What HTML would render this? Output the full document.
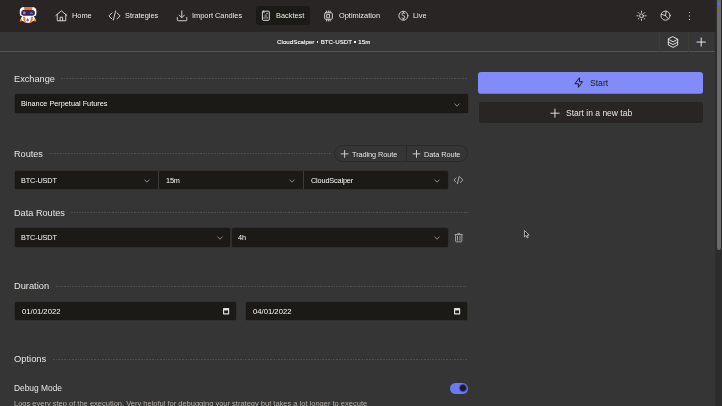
<!DOCTYPE html>
<html><head><meta charset="utf-8">
<style>
*{margin:0;padding:0;box-sizing:border-box}
html,body{width:722px;height:406px;overflow:hidden;background:#353535;font-family:"Liberation Sans",sans-serif;color:#e7e5e4}
.a{position:absolute;white-space:nowrap;line-height:1;will-change:transform}
svg{position:absolute;overflow:visible}
.ic{width:13.54px;height:13.54px;fill:none;stroke:#d6d3d1;stroke-width:1.5;stroke-linecap:round;stroke-linejoin:round}
.ic5{width:11.28px;height:11.28px;fill:none;stroke:#d6d3d1;stroke-width:1.5;stroke-linecap:round;stroke-linejoin:round}
#nav{position:absolute;left:0;top:0;width:715px;height:31.5px;background:#292524}
#sub{position:absolute;left:0;top:31.5px;width:715px;height:20px;background:#363636;border-bottom:1px solid #57514b}
.nt{font-size:7.4px;top:12px;color:#ecebea}
.h{font-size:9.2px;color:#e7e5e4}
.dots{position:absolute;height:1.3px;margin-top:.2px;background-image:repeating-linear-gradient(90deg,#4f4c49 0 1.7px,transparent 1.7px 2.75px)}
.sel{position:absolute;background:#1c1a17;border-radius:1.6px;box-shadow:0 0 0 .5px #2d2a27}
.st{font-size:7.3px;letter-spacing:-.15px;color:#fafaf9}
.chev{stroke:#a8a29e;stroke-width:.8;fill:none}
#scroll{position:absolute;left:715px;top:0;width:7px;height:406px;background:#2c2c2c}
#thumb{position:absolute;left:716.8px;top:0;width:4.2px;height:250px;background:#6b6b6b;border-radius:0 0 2px 2px}
</style></head><body>
<div id="nav">
  <!-- logo -->
  <svg style="left:0;top:0" width="40" height="28" viewBox="0 0 40 28">
    <path d="M22.2 16 L19.7 21.2 L22.9 21 L23.3 16.5Z M33.8 16 L36.3 21.2 L33.1 21 L32.7 16.5Z" fill="#fff"/>
    <path d="M21 18.7 L19.7 21.2 L22.3 21.05Z M35 18.7 L36.3 21.2 L33.7 21.05Z" fill="#f97316"/>
    <path d="M22.6 15.5 L33.4 15.5 L33.4 19.6 Q33 22.9 28 22.9 Q23 22.9 22.6 19.6 Z" fill="#fff"/>
    <path d="M22.9 16.7 L25.1 16.7 Q25.2 20.6 26.2 22.9 L25.1 22.9 Q23 21 22.9 16.7Z M33.1 16.7 L30.9 16.7 Q30.8 20.6 29.8 22.9 L30.9 22.9 Q33 21 33.1 16.7Z" fill="#f97316"/>
    <path d="M27.65 17.9 Q29 19.6 28.9 20.5 Q28.8 21.5 27.65 21.5 Q26.5 21.5 26.4 20.5 Q26.3 19.6 27.65 17.9Z" fill="#5663ee"/>
    <path d="M19.8 11.2 Q19.8 7 24.3 7 L31.9 7 Q36.4 7 36.4 11.2 L36.4 14 Q36.4 16.3 34.1 16.3 L22.1 16.3 Q19.8 16.3 19.8 14 Z" fill="#fff"/>
    <path d="M24 7.05 L32.6 7.05 L32.2 9.9 L24.4 9.9 Z" fill="#f97316"/>
    <rect x="21.2" y="10" width="13.7" height="5.8" rx="2.7" fill="#2f2a78"/>
    <circle cx="24.3" cy="12.8" r="1.4" fill="#f97316"/>
    <path d="M30.35 13.75 Q31.45 11.7 32.55 13.75" stroke="#f97316" stroke-width="1.15" fill="none"/>
  </svg>
  
  <div class="a nt" style="left:71.6px">Home</div>
  
  <div class="a nt" style="left:124.6px">Strategies</div>
  
  <div class="a nt" style="left:191.6px">Import Candles</div>
  <div style="position:absolute;left:256px;top:6px;width:54px;height:19px;background:#1c1a17;border-radius:3px"></div>
  
  <div class="a nt" style="left:276px">Backtest</div>
  
  <div class="a nt" style="left:338.6px">Optimization</div>
  
  <div class="a nt" style="left:413.4px">Live</div>
  
  
  
</div>
<div id="sub">
  <div class="a" style="left:276.9px;top:7.45px;font-size:6.15px;letter-spacing:.05px;color:#fafaf9;-webkit-text-stroke:.12px #fafaf9">CloudScalper <span style="display:inline-block;width:1.5px;height:1.5px;background:#fafaf9;vertical-align:1.3px;margin:0 .6px"></span> BTC-USDT <span style="display:inline-block;width:1.5px;height:1.5px;background:#fafaf9;vertical-align:1.3px;margin:0 .6px"></span> 15m</div>
  <div style="position:absolute;left:658.5px;top:0;width:.6px;height:20px;background:#403c38"></div>
  <div style="position:absolute;left:687.5px;top:0;width:.6px;height:20px;background:#403c38"></div>
  
  
</div>

<!-- Exchange -->
<div class="a h" style="left:14px;top:75.1px">Exchange</div>
<div class="dots" style="left:60.5px;top:77.7px;width:407.5px"></div>
<div class="sel" style="left:14.6px;top:94.1px;width:453px;height:18.7px"></div>
<div class="a st" style="left:20.7px;top:100.1px;font-size:7.3px;letter-spacing:0">Binance Perpetual Futures</div>
<svg style="left:453.5px;top:102.5px" width="6" height="4" viewBox="0 0 6 4"><path class="chev" d="M.5 .6L3 3.2 5.5 .6"/></svg>

<!-- Start buttons -->
<div style="position:absolute;left:478px;top:72px;width:225px;height:22px;background:#818cf8;border-radius:3px;border-bottom:1px solid #6d72e0"></div>
<svg style="left:560px;top:70px" width="30" height="25" viewBox="560 70 30 25" fill="none" stroke="#1c1917" stroke-width="1" stroke-linecap="round" stroke-linejoin="round"><path d="M579.46 78.2V81.74H582.58L578.42 87.3V83.77H575.3Z"/></svg>
<div class="a" style="left:589.9px;top:78.8px;font-size:8.6px;color:#1c1917">Start</div>
<div style="position:absolute;left:478.7px;top:102px;width:224.2px;height:21px;background:#292524;border-radius:3px"></div>

<div class="a" style="left:565.8px;top:108.5px;font-size:8.5px;color:#e7e5e4">Start in a new tab</div>

<svg style="left:0;top:0" width="722" height="406" viewBox="0 0 722 406" fill="none" stroke-width=".95" stroke-linecap="round">
<path d="M554.95 109.05V117.35M550.8 113.2H559.1" stroke="#e7e5e4"/>
<path d="M344.65 150.45V157.35M341.2 153.9H348.1M416.5 150.45V157.35M413.05 153.9H419.95" stroke="#d6d3d1"/>
</svg>
<!-- Routes -->
<div class="a h" style="left:14px;top:150px;font-size:9.12px">Routes</div>
<div class="dots" style="left:49px;top:152.7px;width:282px"></div>
<div style="position:absolute;left:334.2px;top:145px;width:133.6px;height:17.3px;border:1px solid #2a2a2a;border-radius:9px"></div>
<div style="position:absolute;left:406px;top:145px;width:1px;height:17.3px;background:#2a2a2a"></div>

<div class="a" style="left:352.2px;top:151px;font-size:7.35px;letter-spacing:-.08px">Trading Route</div>

<div class="a" style="left:423.7px;top:151px;font-size:7.35px;letter-spacing:-.08px">Data Route</div>

<div class="sel" style="left:14.6px;top:170.8px;width:433px;height:18px"></div>
<div style="position:absolute;left:158.2px;top:171px;width:.8px;height:17.8px;background:#3a3a3a"></div>
<div style="position:absolute;left:303.4px;top:171px;width:.8px;height:17.8px;background:#3a3a3a"></div>
<div class="a st" style="left:21px;top:176.7px">BTC-USDT</div>
<svg style="left:144px;top:178.5px" width="6" height="4" viewBox="0 0 6 4"><path class="chev" d="M.5 .6L3 3.2 5.5 .6"/></svg>
<div class="a st" style="left:165.6px;top:176.7px">15m</div>
<svg style="left:288.5px;top:178.5px" width="6" height="4" viewBox="0 0 6 4"><path class="chev" d="M.5 .6L3 3.2 5.5 .6"/></svg>
<div class="a st" style="left:311px;top:176.7px">CloudScalper</div>
<svg style="left:434px;top:178.5px" width="6" height="4" viewBox="0 0 6 4"><path class="chev" d="M.5 .6L3 3.2 5.5 .6"/></svg>
<svg style="left:440px;top:165px" width="30" height="30" viewBox="440 165 30 30" fill="none" stroke="#b3afab" stroke-width=".95" stroke-linecap="round" stroke-linejoin="round"><path d="M455.9 178 453.95 180 455.9 182M460.5 177.5 462.8 180 460.5 182.5M459.3 176.3 457.4 183.6"/></svg>

<!-- Data Routes -->
<div class="a h" style="left:14px;top:208.7px;font-size:9.17px">Data Routes</div>
<div class="dots" style="left:71px;top:211.7px;width:397px"></div>
<div class="sel" style="left:14.6px;top:227.7px;width:215.4px;height:19px"></div>
<div class="sel" style="left:232.1px;top:227.7px;width:216px;height:19px"></div>
<div class="a st" style="left:21px;top:234px">BTC-USDT</div>
<svg style="left:216.5px;top:236px" width="6" height="4" viewBox="0 0 6 4"><path class="chev" d="M.5 .6L3 3.2 5.5 .6"/></svg>
<div class="a st" style="left:238px;top:234px">4h</div>
<svg style="left:433.5px;top:236px" width="6" height="4" viewBox="0 0 6 4"><path class="chev" d="M.5 .6L3 3.2 5.5 .6"/></svg>
<svg style="left:440px;top:220px" width="30" height="30" viewBox="440 220 30 30" fill="none" stroke="#a9a5a2" stroke-width=".95" stroke-linecap="round" stroke-linejoin="round"><path d="M455.6 234.9V241.1Q455.6 241.8 456.3 241.8H461.2Q461.9 241.8 461.9 241.1V234.9M455.1 234.6H462.4M456.9 234.5Q457.3 233.3 458.75 233.3Q460.2 233.3 460.6 234.5M457.5 236.2V240.2M460 236.2V240.2"/></svg>

<!-- Duration -->
<div class="a h" style="left:14px;top:282px;font-size:9.29px">Duration</div>
<div class="dots" style="left:56px;top:285.6px;width:412px"></div>
<div class="sel" style="left:14.6px;top:301.8px;width:221.6px;height:18px"></div>
<div class="sel" style="left:246.1px;top:301.8px;width:221.4px;height:18px"></div>
<div class="a st" style="left:22.2px;top:307.6px;font-size:7.7px;letter-spacing:0">01/01/2022</div>
<div class="a st" style="left:252.7px;top:307.6px;font-size:7.7px;letter-spacing:0">04/01/2022</div>
<svg style="left:222.7px;top:307.7px" width="6.2" height="6.4" viewBox="0 0 6.2 6.4"><rect x="0" y="0" width="6.2" height="6.4" rx=".7" fill="#e2e0df"/><rect x="1.15" y="2.45" width="3.9" height="2.8" fill="#1c1a17"/></svg>
<svg style="left:453.9px;top:307.7px" width="6.2" height="6.4" viewBox="0 0 6.2 6.4"><rect x="0" y="0" width="6.2" height="6.4" rx=".7" fill="#e2e0df"/><rect x="1.15" y="2.45" width="3.9" height="2.8" fill="#1c1a17"/></svg>

<!-- Options -->
<div class="a h" style="left:14px;top:355.4px;font-size:9.37px">Options</div>
<div class="dots" style="left:53px;top:358.7px;width:415px"></div>
<div class="a" style="left:14px;top:383.8px;font-size:8.38px;color:#e7e5e4">Debug Mode</div>
<div class="a" style="left:14px;top:400px;font-size:7.5px;color:#b3aeaa">Logs every step of the execution. Very helpful for debugging your strategy but takes a lot longer to execute</div>
<div style="position:absolute;left:449.9px;top:382.9px;width:18.5px;height:10.7px;background:#6c79f2;border-radius:6px"></div>
<div style="position:absolute;left:459.1px;top:384.2px;width:8.1px;height:8.1px;background:#1c1917;border-radius:50%;border:.7px solid #3d44c4"></div>

<!-- cursor -->
<svg style="left:523.6px;top:229.6px" width="6" height="8.6" viewBox="0 0 7 10"><path d="M.5 .5 L.5 8 L2.3 6.3 L3.6 9.2 L4.9 8.6 L3.7 5.8 L6 5.8 Z" fill="#1a1a1a" stroke="#e8e8e8" stroke-width=".8"/></svg>

<svg style="left:0;top:0" width="722" height="52" viewBox="0 0 722 52" fill="none" stroke="#d9d6d4" stroke-width=".95" stroke-linecap="round" stroke-linejoin="round">
  <path d="M55.9 15.4 61.35 10.85 66.8 15.4M57.25 14.3V20.75H65.75V14.3M60.1 20.75V17.2H62.6V20.75"/>
  <path d="M111.9 12.9 108.95 15.9 111.9 19M117.1 12.9 120 15.9 117.1 19M115.6 10.95 113.4 20"/>
  <path d="M181.8 10.95V17.6M179.2 15.1 181.8 17.7 184.4 15.1M177.3 17.5V19.8Q177.3 20.75 178.3 20.75H185.8Q186.8 20.75 186.8 19.8V17.5"/>
  <rect x="262.4" y="11.2" width="6.9" height="9.1" rx=".8" stroke="#e7e5e4"/>
  <path d="M263.9 12.6h.2M267 13.4h.2M263.9 17.9h.2M267 17.9h.2" stroke="#e7e5e4" stroke-width="1.1"/>
  <rect x="264.3" y="14.3" width="2.9" height="4.2" fill="#6d6966" stroke="none"/>
  <rect x="324.7" y="12.7" width="7.6" height="6.6" rx="1"/>
  <rect x="327.1" y="14.4" width="2.5" height="3.4"/>
  <path d="M326.6 11V12.3M328.35 11V12.3M330.1 11V12.3M326.6 19.7V21M328.35 19.7V21M330.1 19.7V21"/>
  <circle cx="403.4" cy="15.75" r="4.5"/>
  <path d="M404.7 13.7Q404.3 12.85 403.3 12.9Q402 13 402 14.2Q402.1 15.4 403.4 15.65Q404.8 15.95 404.8 17.2Q404.7 18.5 403.3 18.5Q402.3 18.5 401.9 17.8M403.4 11.95V12.85M403.4 18.55V19.5"/>
  <circle cx="641.5" cy="15.8" r="1.9"/>
  <path d="M641.5 11.2V12.4M641.5 19.2V20.4M636.9 15.8H638.1M644.9 15.8H646.1M638.25 12.55 639.1 13.4M643.9 18.2 644.75 19.05M638.25 19.05 639.1 18.2M643.9 13.4 644.75 12.55"/>
  <circle cx="665.5" cy="15.65" r="4.55"/>
  <path d="M665.5 15.65 666.1 11.2M665.5 15.65 661.4 14.3M665.5 15.65 668.5 18.9"/>
  <path d="M689.5 11.95v.9M689.5 15.5v.9M689.5 19.05v.9" stroke-width="1.1" stroke-linecap="butt"/>
  <path d="M673.1 36.8 677.7 39.2V45L673.1 47.4 668.3 45V39.2ZM668.3 39.2 673.1 41.8 677.7 39.2M668.3 42.1 673.1 44.6 677.7 42.1" stroke="#e7e5e4"/>
  <path d="M701.2 37.9V46.2M697 42.05H705.4" stroke="#e7e5e4" stroke-width="1"/>
</svg>
<div id="scroll"></div>
<div id="thumb"></div>
<div style="position:absolute;left:717.05px;top:2.05px;width:3.3px;height:3.3px;border-radius:50%;background:#5c64f2"></div>
</body></html>
